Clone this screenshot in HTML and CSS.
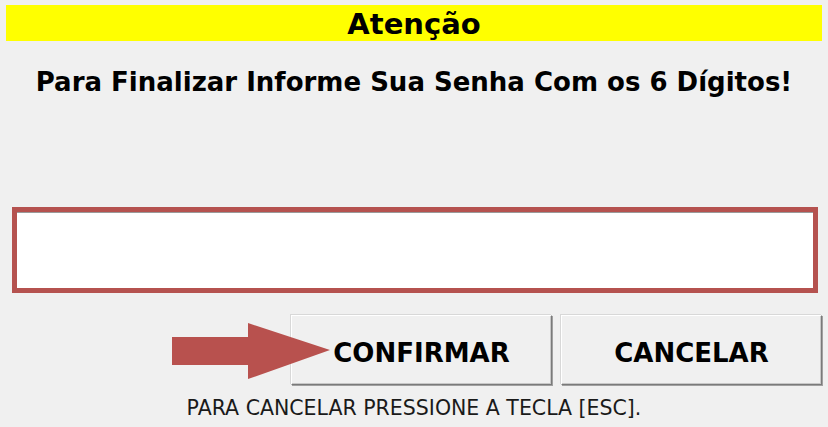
FILE: index.html
```html
<!DOCTYPE html>
<html lang="pt-BR">
<head>
<meta charset="utf-8">
<title>Atenção</title>
<link rel="stylesheet" href="styles.css">
</head>
<body>
<div class="dialog">
  <div class="title">Atenção</div>
  <div class="message">Para Finalizar Informe Sua Senha Com os 6 Dígitos!</div>
  <div class="field"><input class="password" type="password" aria-label="Senha"></div>
  <div class="actions">
    <svg class="arrow" width="160" height="58" viewBox="0 0 160 58" aria-hidden="true">
      <polygon points="0,14 76,14 76,0 158,27 76,56 76,42 0,42" fill="#b8514e"/>
    </svg>
    <button class="btn">CONFIRMAR</button>
    <button class="btn">CANCELAR</button>
  </div>
  <div class="hint">PARA CANCELAR PRESSIONE A TECLA [ESC].</div>
</div>
</body>
</html>
```
FILE: styles.css
```css
html, body {
  margin: 0;
  padding: 0;
  background: #f0f0f0;
}
.dialog {
  width: 828px;
  height: 427px;
  padding-top: 5px;
  box-sizing: border-box;
  font-family: "DejaVu Sans", Verdana, sans-serif;
  color: #000;
}
.title {
  margin: 0 6px;
  height: 36px;
  background: #ffff00;
  text-align: center;
  font-family: "DejaVu Sans", Verdana, sans-serif;
  font-weight: bold;
  font-size: 29px;
  line-height: 38px;
}
.message {
  margin-top: 26px;
  text-align: center;
  font-weight: bold;
  font-size: 26px;
  line-height: 30px;
}
.field {
  margin: 110px 10px 0 12px;
}
.password {
  display: block;
  width: 100%;
  height: 86px;
  box-sizing: border-box;
  border: 5px solid #b5524f;
  box-shadow: inset 0 1px 0 #9a9a9a;
  background: #fff;
  outline: none;
  padding: 0 8px;
  font-size: 24px;
}
.actions {
  position: relative;
  margin-top: 22px;
  display: flex;
  justify-content: flex-end;
  gap: 9px;
  padding-right: 6px;
}
.btn {
  width: 261px;
  height: 70px;
  box-sizing: border-box;
  background: #f0f0f0;
  border: 1px solid;
  border-color: #ffffff #7a7a7a #7a7a7a #ffffff;
  box-shadow: 1px 1px 0 #a0a0a0, inset -1px -1px 0 #c8c8c8, -1px -1px 0 #d8d8d8;
  font-family: "DejaVu Sans", Verdana, sans-serif;
  font-weight: bold;
  font-size: 26px;
  color: #000;
  padding: 5px 0 0;
}
.arrow {
  position: absolute;
  left: 172px;
  top: 8px;
}
.hint {
  margin-top: 12px;
  text-align: center;
  font-family: "DejaVu Sans", Verdana, sans-serif;
  font-size: 20.5px;
  line-height: 22px;
  color: #1a1a1a;
}
```
